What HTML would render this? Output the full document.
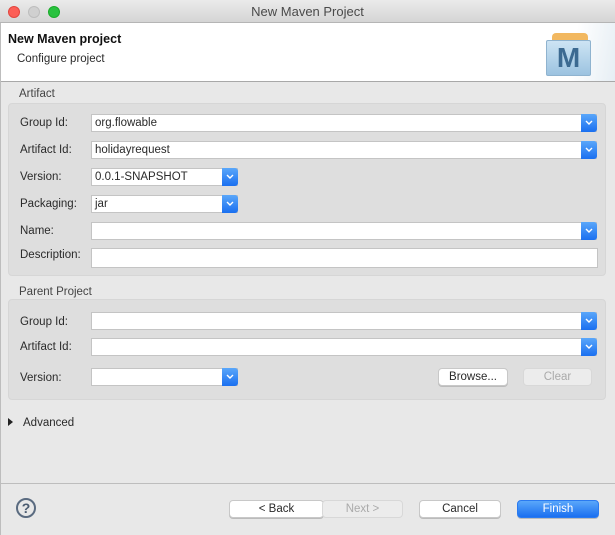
<!DOCTYPE html>
<html><head><style>
*{box-sizing:border-box;margin:0;padding:0}
body{width:615px;height:535px;overflow:hidden;background:#e8e8e8;font-family:"Liberation Sans",sans-serif;font-size:11.5px;color:#2a2a2a;position:relative}
.a{position:absolute}
.tb{left:0;top:0;width:615px;height:23px;background:linear-gradient(#ebebeb,#d5d5d5);border-bottom:1px solid #b5b5b5;text-align:center;line-height:23px;font-size:13px;color:#4a4a4a}
.dot{width:12px;height:12px;border-radius:50%;top:6px}
.hdr{left:0;top:23px;width:615px;height:59px;background:#fff;border-bottom:1px solid #a8a8a8}
.box{background:#dedede;border-radius:4px;border:1px solid #d6d6d6}
.lbl{left:20px}
.f{background:#fff;border:1px solid #c4c4c4;height:18px;line-height:16px;padding-left:3px;font-size:11.5px}
.arr{position:absolute;right:-1px;top:-1px;width:16px;height:18px;background:linear-gradient(#5aa7fa,#1a6ff0);border-radius:0 3px 3px 0}
.arr svg{position:absolute;left:4px;top:6px}
.btn{background:#fff;border:1px solid #c8c8c8;border-radius:4px;height:18px;text-align:center;line-height:16px;font-size:11.5px;box-shadow:0 1px 0 #bbb}
.dis{background:#ececec;color:#aaa;box-shadow:none;border-color:#d8d8d8}
</style></head><body>
<div class="a tb">New Maven Project</div>
<div class="a dot" style="left:8px;background:#fc5f57;border:1px solid #e1463f"></div>
<div class="a dot" style="left:28px;background:#d0d0d0;border:1px solid #bdbdbd"></div>
<div class="a dot" style="left:48px;background:#29c23f;border:1px solid #1aab2a"></div>
<div class="a hdr">
 <div class="a" style="left:8px;top:9px;font-weight:bold;font-size:12.5px;color:#111">New Maven project</div>
 <div class="a" style="left:17px;top:30px;font-size:11.5px">Configure project</div>
 <div class="a" style="left:520px;top:0;width:95px;height:58px;background:linear-gradient(100deg,#fff 55%,#e6eef4)"></div>
 <div class="a" style="left:552px;top:10px;width:36px;height:10px;background:#f2b860;border-radius:4px 4px 0 0"></div>
 <div class="a" style="left:546px;top:17px;width:45px;height:36px;background:linear-gradient(#cde4f4,#9cc3e0);border:1px solid #8fb3cf;border-radius:2px;color:#3c6a91;font-weight:bold;font-size:28px;text-align:center;line-height:34px">M</div>
</div>
<div class="a" style="left:19px;top:88px;color:#444">Artifact</div>
<div class="a box" style="left:8px;top:103px;width:598px;height:173px"></div>
<div class="a lbl" style="top:117px">Group Id:</div>
<div class="a f" style="left:91px;top:114px;width:506px">org.flowable<div class="arr"><svg width="8" height="6"><path d="M1 1L4 4L7 1" stroke="#fff" stroke-width="1.4" fill="none"/></svg></div></div>
<div class="a lbl" style="top:144px">Artifact Id:</div>
<div class="a f" style="left:91px;top:141px;width:506px">holidayrequest<div class="arr"><svg width="8" height="6"><path d="M1 1L4 4L7 1" stroke="#fff" stroke-width="1.4" fill="none"/></svg></div></div>
<div class="a lbl" style="top:171px">Version:</div>
<div class="a f" style="left:91px;top:168px;width:147px">0.0.1-SNAPSHOT<div class="arr"><svg width="8" height="6"><path d="M1 1L4 4L7 1" stroke="#fff" stroke-width="1.4" fill="none"/></svg></div></div>
<div class="a lbl" style="top:198px">Packaging:</div>
<div class="a f" style="left:91px;top:195px;width:147px">jar<div class="arr"><svg width="8" height="6"><path d="M1 1L4 4L7 1" stroke="#fff" stroke-width="1.4" fill="none"/></svg></div></div>
<div class="a lbl" style="top:225px">Name:</div>
<div class="a f" style="left:91px;top:222px;width:506px"><div class="arr"><svg width="8" height="6"><path d="M1 1L4 4L7 1" stroke="#fff" stroke-width="1.4" fill="none"/></svg></div></div>
<div class="a lbl" style="top:249px">Description:</div>
<div class="a f" style="left:91px;top:248px;width:507px;height:20px"></div>
<div class="a" style="left:19px;top:286px;color:#444">Parent Project</div>
<div class="a box" style="left:8px;top:299px;width:598px;height:101px"></div>
<div class="a lbl" style="top:316px">Group Id:</div>
<div class="a f" style="left:91px;top:312px;width:506px"><div class="arr"><svg width="8" height="6"><path d="M1 1L4 4L7 1" stroke="#fff" stroke-width="1.4" fill="none"/></svg></div></div>
<div class="a lbl" style="top:341px">Artifact Id:</div>
<div class="a f" style="left:91px;top:338px;width:506px"><div class="arr"><svg width="8" height="6"><path d="M1 1L4 4L7 1" stroke="#fff" stroke-width="1.4" fill="none"/></svg></div></div>
<div class="a lbl" style="top:372px">Version:</div>
<div class="a f" style="left:91px;top:368px;width:147px"><div class="arr"><svg width="8" height="6"><path d="M1 1L4 4L7 1" stroke="#fff" stroke-width="1.4" fill="none"/></svg></div></div>
<div class="a btn" style="left:438px;top:368px;width:70px">Browse...</div>
<div class="a btn dis" style="left:523px;top:368px;width:69px">Clear</div>
<div class="a" style="left:8px;top:418px;width:0;height:0;border-left:5px solid #222;border-top:4px solid transparent;border-bottom:4px solid transparent"></div>
<div class="a" style="left:23px;top:417px">Advanced</div>
<div class="a" style="left:0;top:483px;width:615px;height:1px;background:#bdbdbd"></div>
<div class="a" style="left:16px;top:498px;width:20px;height:20px;border:2px solid #5a6b80;border-radius:50%;text-align:center;line-height:16px;font-weight:bold;font-size:14px;color:#4a5b70">?</div>
<div class="a btn" style="left:229px;top:500px;width:95px">&lt; Back</div>
<div class="a btn dis" style="left:322px;top:500px;width:81px">Next &gt;</div>
<div class="a btn" style="left:419px;top:500px;width:82px">Cancel</div>
<div class="a btn" style="left:517px;top:500px;width:82px;background:linear-gradient(#5aa7fa,#1a6ff0);color:#fff;border-color:#2a7af0">Finish</div>
<div class="a" style="left:0;top:23px;width:1px;height:512px;background:#bdbdbd"></div>
</body></html>
